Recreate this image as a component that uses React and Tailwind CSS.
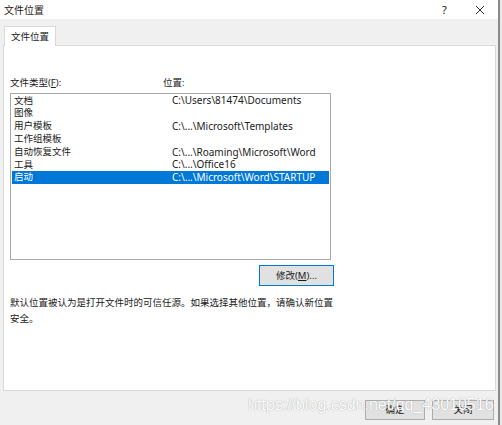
import React from 'react';

const ROWS = [
  { name: '文档', path: 'C:\\Users\\81474\\Documents' },
  { name: '图像', path: '' },
  { name: '用户模板', path: 'C:\\...\\Microsoft\\Templates' },
  { name: '工作组模板', path: '' },
  { name: '自动恢复文件', path: 'C:\\...\\Roaming\\Microsoft\\Word' },
  { name: '工具', path: 'C:\\...\\Office16' },
  { name: '启动', path: 'C:\\...\\Microsoft\\Word\\STARTUP', selected: true },
];

const FONT = "font-['Noto_Sans','Noto_Sans_CJK_SC',sans-serif]";

export default function App() {
  return (
    <div className={`w-[502px] h-[425px] flex bg-[#f0f0f0] text-[#1a1a1a] text-[9.5px] leading-none overflow-hidden relative ${FONT}`}>
      <div className="w-[498px] flex flex-col">
        {/* title bar */}
        <div className="h-[19px] bg-white flex items-center pl-[4px] pr-[13px] text-[10px]">
          <span className="flex-1">文件位置</span>
          <span className="w-[33px] text-[11px]">?</span>
          <svg width="10" height="10" viewBox="0 0 10 10">
            <path d="M1 1L9 9M9 1L1 9" stroke="#333" strokeWidth="1" />
          </svg>
        </div>

        {/* tab strip */}
        <div className="h-[26px] flex items-end pl-[4px]">
          <div className="h-[20px] w-[52px] bg-white border border-b-0 border-[#d9d9d9] flex items-center justify-center relative top-[1px]">
            文件位置
          </div>
        </div>

        {/* panel */}
        <div className="ml-[3px] w-[493px] h-[346px] bg-white border border-[#d9d9d9] pl-[6px] pt-[31px]">
          <div className="flex h-[12px] items-center">
            <span className="w-[153px]">文件类型(<span className="underline">F</span>):</span>
            <span>位置:</span>
          </div>
          <div className="mt-[4px] w-[321px] h-[167px] border border-[#a8a8a8] bg-white px-[1px]">
            {ROWS.map((r) => (
              <div
                key={r.name}
                className={`h-[12.8px] flex items-center ${r.selected ? 'bg-[#0078d7] text-white' : ''}`}
              >
                <span className="w-[160px] pl-[2px]">{r.name}</span>
                <span className="text-[10px]">{r.path}</span>
              </div>
            ))}
          </div>
          <div className="mt-[5px] ml-[249px] w-[75px] h-[21px] bg-[#e1e1e1] border border-[#0078d7] flex items-center justify-center">
            修改(<span className="underline">M</span>)...
          </div>
          <p className="mt-[9px] w-[326px] leading-[16px]">
            默认位置被认为是打开文件时的可信任源。如果选择其他位置，请确认新位置安全。
          </p>
        </div>

        {/* footer */}
        <div className="flex-1 flex items-start justify-end pt-[9px] pr-[4px] gap-[7px]">
          <div className="w-[60px] h-[20px] bg-[#e1e1e1] border border-[#adadad] flex items-center justify-center">
            确定
          </div>
          <div className="w-[62px] h-[20px] bg-[#e1e1e1] border border-[#adadad] flex items-center justify-center">
            关闭
          </div>
        </div>
      </div>
      <div className="w-[2px] bg-[#8a8a8a]" />
      <div className="w-[2px] bg-[#e8e8e8]" />

      {/* watermark */}
      <div className="absolute left-[248px] top-[397px] text-[16px] text-white font-['Liberation_Sans',sans-serif] [text-shadow:0_0_1px_#8a8a8a] pointer-events-none">
        https://blog.csdn.net/qq_43010516
      </div>
    </div>
  );
}
